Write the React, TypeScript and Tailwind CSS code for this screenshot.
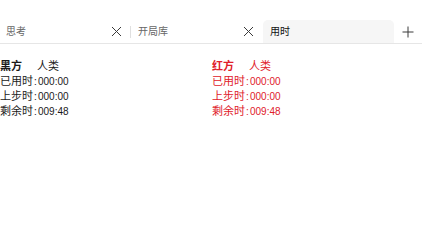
import React from "react";

const Close = () => (
  <svg width="11" height="11" viewBox="0 0 11 11" className="shrink-0">
    <path d="M1 1 L10 10 M10 1 L1 10" stroke="#3a3a3a" strokeWidth="1" fill="none" />
  </svg>
);

const Plus = () => (
  <svg width="12" height="12" viewBox="0 0 12 12">
    <path d="M6 0.5 V11.5 M0.5 6 H11.5" stroke="#3a3a3a" strokeWidth="1" fill="none" />
  </svg>
);

function Side({ name, red }: { name: string; red?: boolean }) {
  const c = red ? "text-[#e0202a]" : "text-[#1a1a1a]";
  const rows: [string, string][] = [
    ["已用时", "000:00"],
    ["上步时", "000:00"],
    ["剩余时", "009:48"],
  ];
  return (
    <div className={`flex flex-col text-[11px] leading-[15px] ${c}`}>
      <div className="flex">
        <span className="w-[37px] font-bold">{name}</span>
        <span>人类</span>
      </div>
      {rows.map(([l, v]) => (
        <div className="flex items-baseline" key={l}>
          <span className="w-[38px] whitespace-nowrap">
            {l}
            <span className="inline-block w-[5px] text-[10px] pl-[1px]">:</span>
          </span>
          <span className="text-[10px]">{v}</span>
        </div>
      ))}
    </div>
  );
}

export default function App() {
  return (
    <div
      className="w-[422px] h-[200px] bg-white"
      style={{ fontFamily: '"Liberation Sans", "Noto Sans CJK SC", sans-serif' }}
    >
      <div className="pt-[20px]">
        <div className="flex items-end h-[24px] border-b border-[#e6e6e6]">
          <div className="w-[131px] h-full flex items-center pl-[6px] pr-[9px] relative">
            <span className="flex-1 text-[10px] text-[#666]">思考</span>
            <Close />
            <div className="absolute right-0 top-[6px] h-[12px] w-px bg-[#e0e0e0]" />
          </div>
          <div className="w-[132px] h-full flex items-center pl-[7px] pr-[9px]">
            <span className="flex-1 text-[10px] text-[#666]">开局库</span>
            <Close />
          </div>
          <div className="w-[131px] h-full flex items-center pl-[7px] bg-[#f6f6f6] rounded-t-[5px]">
            <span className="text-[10px] text-[#111]">用时</span>
          </div>
          <div className="flex-1 h-full flex items-center justify-center">
            <Plus />
          </div>
        </div>
        <div className="grid grid-cols-2 pt-[15px]">
          <div>
            <Side name="黑方" />
          </div>
          <div className="pl-[1px]">
            <Side name="红方" red />
          </div>
        </div>
      </div>
    </div>
  );
}
